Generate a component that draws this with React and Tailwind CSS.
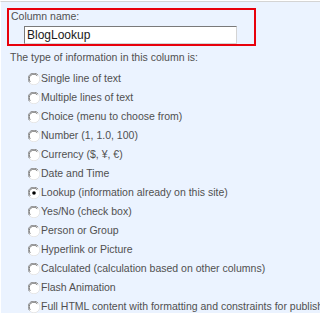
import React from 'react';

const types = [
  'Single line of text',
  'Multiple lines of text',
  'Choice (menu to choose from)',
  'Number (1, 1.0, 100)',
  'Currency ($, ¥, €)',
  'Date and Time',
  'Lookup (information already on this site)',
  'Yes/No (check box)',
  'Person or Group',
  'Hyperlink or Picture',
  'Calculated (calculation based on other columns)',
  'Flash Animation',
  'Full HTML content with formatting and constraints for publishing',
];

// Old-style Windows radio: sunken ring, dark top-left, light bottom-right
function Radio({ checked }) {
  return (
    <svg width="12" height="12" viewBox="0 0 12 12" className="shrink-0">
      <circle cx="6" cy="6" r="5.5" fill="#ffffff" />
      <path d="M10 2 A5.5 5.5 0 0 0 1.5 9.5" fill="none" stroke="#8a8a8a" strokeWidth="1" />
      <path d="M9.2 2.8 A4.5 4.5 0 0 0 2.3 8.7" fill="none" stroke="#555555" strokeWidth="0.8" />
      <path d="M1.8 10 A5.5 5.5 0 0 0 10.2 2" fill="none" stroke="#e6e6e6" strokeWidth="1" />
      {checked && <circle cx="6" cy="6" r="1.8" fill="#000000" />}
    </svg>
  );
}

export default function App() {
  return (
    <div className="w-[320px] h-[313px] overflow-hidden bg-[#ebf3ff] border-t border-[#d4d4d4] border-l border-l-white mt-px font-['Liberation_Sans',Arial,sans-serif] text-[10.5px] text-[#505050]">
      <div className="ml-[6px] mt-[6px] w-[249px] h-[38px] border-2 border-[#e8000b] pl-[2px]">
        <div className="leading-[13px]">Column name:</div>
        <input
          readOnly
          value="BlogLookup"
          className="ml-[13px] mt-[3px] w-[213px] h-[18px] bg-white border border-t-[#7a7a7a] border-l-[#7a7a7a] border-b-[#d4d4d4] border-r-[#d4d4d4] px-[2px] text-[12px] text-[#1a1a1a] outline-none font-['Liberation_Sans',Arial,sans-serif]"
        />
      </div>
      <div className="ml-[9px] mt-[5px] leading-[13px]">The type of information in this column is:</div>
      <div className="flex flex-col mt-[5px] pl-[27px]">
        {types.map((t, i) => (
          <div key={t} className="flex items-center h-[19px] gap-[1px] whitespace-nowrap">
            <Radio checked={i === 6} />
            <span>{t}</span>
          </div>
        ))}
      </div>
    </div>
  );
}
